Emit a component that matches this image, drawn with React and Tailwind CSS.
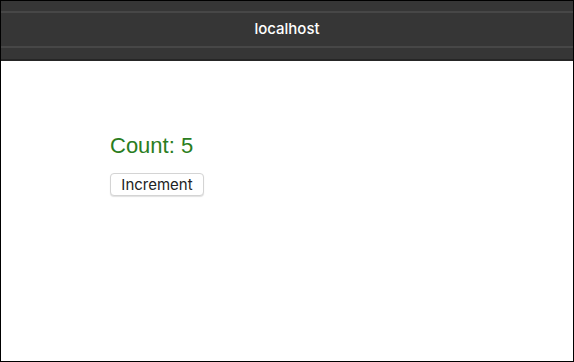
export default function App() {
  return (
    <div className="h-[362px] w-[574px] border border-black bg-white flex flex-col font-['Liberation_Sans',Arial,sans-serif]">
      <div className="h-[60px] shrink-0 bg-[#363636] flex flex-col border-b-2 border-[#262626]">
        <div className="h-[12px] border-b-2 border-[#474747]" />
        <div className="flex-1 flex items-center justify-center font-['Inter',sans-serif] text-[15px] font-medium text-white">
          localhost
        </div>
        <div className="h-[13px] border-t-2 border-[#474747]" />
      </div>
      <main className="flex-1 pl-[109px] pt-[72px]">
        <div className="text-[22px] leading-[26px] text-[#2a7d21]">Count: 5</div>
        <button className="mt-[14px] h-[23px] w-[94px] rounded-[4px] border border-[#d4d4d4] bg-white font-['Inter',sans-serif] text-[15px] text-[#222] shadow-[0_1px_1px_rgba(0,0,0,0.12)]">
          Increment
        </button>
      </main>
    </div>
  );
}
